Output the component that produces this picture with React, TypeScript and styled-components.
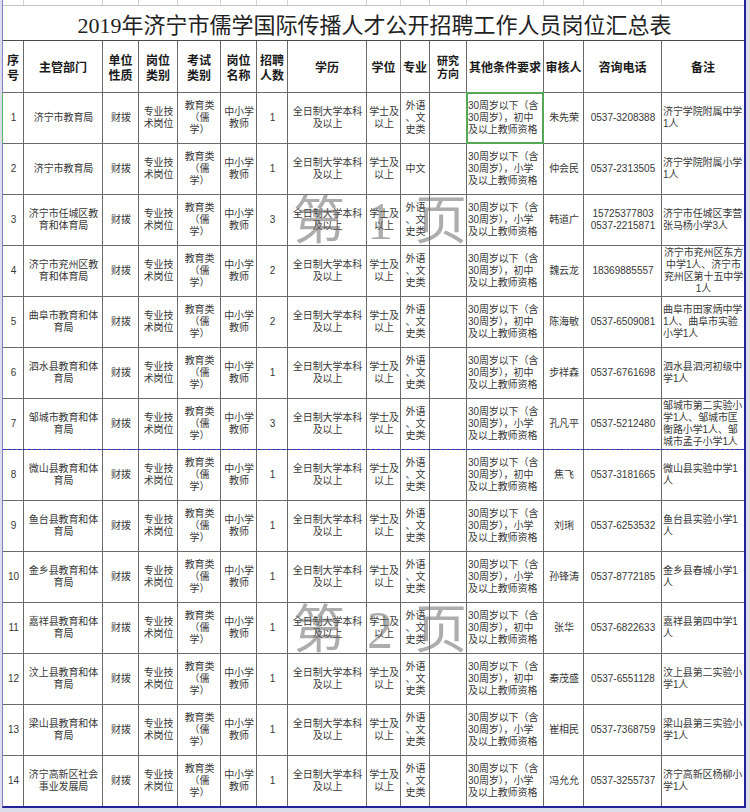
import React from "react";
import styled, { createGlobalStyle } from "styled-components";

const COLS = "20px 78px 35px 38px 42px 35px 30px 78px 33px 28px 36px 76px 39px 77px 82px";

const Global = createGlobalStyle`
  html, body { margin: 0; padding: 0; background: #dcdcea; }
  body { font-family: "Liberation Sans", "Noto Sans CJK SC", sans-serif; }
`;

const Page = styled.div`
  width: 750px;
  height: 812px;
  background: #dcdcea;
  display: flex;
  align-items: flex-start;
  overflow: hidden;
`;

const Sheet = styled.div`
  position: relative;
  margin-left: 2px;
  width: 741px;
  display: flex;
  flex-direction: column;
  border-left: 1px solid #8080c8;
  border-right: 2px solid #24249a;
  border-bottom: 2px solid #24249a;
  background: #fff;
`;

const TopStrip = styled.div`
  display: grid;
  grid-template-columns: ${COLS};
  column-gap: 1px;
  height: 5px;
  background: #d2d2d2;
  border-bottom: 1px solid #c4c4c4;
`;

const StripCell = styled.div`
  background: #fff;
`;

const TitleRow = styled.div`
  height: 34px;
  display: flex;
  align-items: center;
  justify-content: center;
  border-bottom: 1px solid #4a4a4a;
  font-family: "Liberation Serif", "Noto Sans CJK SC", serif;
  font-size: 22px;
  color: #222;
  padding-left: 2px;
`;

const Table = styled.div`
  position: relative;
  display: grid;
  grid-template-columns: ${COLS};
  grid-template-rows: 51px repeat(14, 50px);
  gap: 1px;
  background: #6a6a6a;
`;

const HeadCell = styled.div<{ $small?: boolean }>`
  background: #fff;
  display: flex;
  align-items: center;
  justify-content: center;
  text-align: center;
  white-space: pre;
  font-family: "Noto Sans CJK SC", sans-serif;
  font-size: ${(p) => (p.$small ? "11px" : "12px")};
  line-height: ${(p) => (p.$small ? "13px" : "15px")};
  font-weight: 600;
  color: #1a1a1a;
`;

const Cell = styled.div<{
  $align?: "left" | "center";
  $phone?: boolean;
  $selected?: boolean;
  $mark?: boolean;
}>`
  position: relative;
  background: #fff;
  display: flex;
  align-items: center;
  justify-content: ${(p) => (p.$align === "left" ? "flex-start" : "center")};
  text-align: ${(p) => (p.$align === "left" ? "left" : "center")};
  padding: 0 0 0 1px;
  white-space: pre;
  font-size: 10px;
  letter-spacing: ${(p) => (p.$phone ? "0" : "-0.1px")};
  line-height: 12px;
  color: #383838;
  ${(p) =>
    p.$selected
      ? `box-shadow: 0 0 0 1px #55a855, inset 0 0 0 1px #55a855; z-index: 2;`
      : ""}
  ${(p) => (p.$mark ? `box-shadow: -1px 0 0 0 #5cb85c; z-index: 2;` : "")}
`;

const PageBreak = styled.div<{ $top: number }>`
  position: absolute;
  left: 0;
  right: 0;
  top: ${(p) => p.$top}px;
  height: 0;
  border-top: 1px dashed #2a2ad0;
  z-index: 3;
`;

const Watermark = styled.div<{ $top: number }>`
  position: absolute;
  left: 290px;
  top: ${(p) => p.$top}px;
  display: flex;
  gap: 22px;
  align-items: center;
  font-family: "Liberation Serif", "Noto Sans CJK SC", serif;
  font-size: 52px;
  line-height: 52px;
  color: rgba(105, 105, 105, 0.55);
  pointer-events: none;
  z-index: 4;
`;

const headers: { t: string; small?: boolean }[] = [
  { t: "序\n号" },
  { t: "主管部门" },
  { t: "单位\n性质" },
  { t: "岗位\n类别" },
  { t: "考试\n类别" },
  { t: "岗位\n名称" },
  { t: "招聘\n人数" },
  { t: "学历" },
  { t: "学位" },
  { t: "专业" },
  { t: "研究\n方向", small: true },
  { t: "其他条件要求" },
  { t: "审核人" },
  { t: "咨询电话" },
  { t: "备注" },
];

type Row = {
  n: string;
  dept: string;
  count: string;
  major?: string;
  level: string;
  reviewer: string;
  phone: string;
  note: string;
  noteCenter?: boolean;
};

const rows: Row[] = [
  { n: "1", dept: "济宁市教育局", count: "1", level: "初中", reviewer: "朱先荣", phone: "0537-3208388", note: "济宁学院附属中学\n1人" },
  { n: "2", dept: "济宁市教育局", count: "1", major: "中文", level: "小学", reviewer: "仲会民", phone: "0537-2313505", note: "济宁学院附属小学\n1人" },
  { n: "3", dept: "济宁市任城区教\n育和体育局", count: "3", level: "小学", reviewer: "韩道广", phone: "15725377803\n0537-2215871", note: "济宁市任城区李营\n张马杨小学3人" },
  { n: "4", dept: "济宁市兖州区教\n育和体育局", count: "2", level: "初中", reviewer: "魏云龙", phone: "18369885557", note: "济宁市兖州区东方\n中学1人、济宁市\n兖州区第十五中学\n1人", noteCenter: true },
  { n: "5", dept: "曲阜市教育和体\n育局", count: "2", level: "初中", reviewer: "陈海敏", phone: "0537-6509081", note: "曲阜市田家炳中学\n1人、曲阜市实验\n小学1人" },
  { n: "6", dept: "泗水县教育和体\n育局", count: "1", level: "初中", reviewer: "步祥森", phone: "0537-6761698", note: "泗水县泗河初级中\n学1人" },
  { n: "7", dept: "邹城市教育和体\n育局", count: "3", level: "小学", reviewer: "孔凡平", phone: "0537-5212480", note: "邹城市第二实验小\n学1人、邹城市匡\n衡路小学1人、邹\n城市孟子小学1人" },
  { n: "8", dept: "微山县教育和体\n育局", count: "1", level: "初中", reviewer: "焦飞", phone: "0537-3181665", note: "微山县实验中学1\n人" },
  { n: "9", dept: "鱼台县教育和体\n育局", count: "1", level: "小学", reviewer: "刘琍", phone: "0537-6253532", note: "鱼台县实验小学1\n人" },
  { n: "10", dept: "金乡县教育和体\n育局", count: "1", level: "小学", reviewer: "孙锋涛", phone: "0537-8772185", note: "金乡县春城小学1\n人" },
  { n: "11", dept: "嘉祥县教育和体\n育局", count: "1", level: "初中", reviewer: "张华", phone: "0537-6822633", note: "嘉祥县第四中学1\n人" },
  { n: "12", dept: "汶上县教育和体\n育局", count: "1", level: "初中", reviewer: "秦茂盛", phone: "0537-6551128", note: "汶上县第二实验小\n学1人" },
  { n: "13", dept: "梁山县教育和体\n育局", count: "1", level: "小学", reviewer: "崔相民", phone: "0537-7368759", note: "梁山县第三实验小\n学1人" },
  { n: "14", dept: "济宁高新区社会\n事业发展局", count: "1", level: "小学", reviewer: "冯允允", phone: "0537-3255737", note: "济宁高新区杨柳小\n学1人" },
];

export default function App() {
  return (
    <Page>
      <Global />
      <Sheet>
        <TopStrip>
          {headers.map((_, i) => (
            <StripCell key={i} />
          ))}
        </TopStrip>
        <TitleRow>2019年济宁市儒学国际传播人才公开招聘工作人员岗位汇总表</TitleRow>
        <Table>
          {headers.map((h, i) => (
            <HeadCell key={i} $small={h.small}>
              {h.t}
            </HeadCell>
          ))}
          {rows.map((r, i) => (
            <React.Fragment key={r.n}>
              <Cell $mark={i === 0}>{r.n}</Cell>
              <Cell>{r.dept}</Cell>
              <Cell>财拨</Cell>
              <Cell>{"专业技\n术岗位"}</Cell>
              <Cell>{"教育类\n（儒\n学）"}</Cell>
              <Cell>{"中小学\n教师"}</Cell>
              <Cell>{r.count}</Cell>
              <Cell>{"全日制大学本科\n及以上"}</Cell>
              <Cell>{"学士及\n以上"}</Cell>
              <Cell>{r.major ?? "外语\n、文\n史类"}</Cell>
              <Cell />
              <Cell $align="left" $selected={i === 0}>
                {`30周岁以下（含\n30周岁），${r.level}\n及以上教师资格`}
              </Cell>
              <Cell>{r.reviewer}</Cell>
              <Cell $phone>{r.phone}</Cell>
              <Cell $align={r.noteCenter ? "center" : "left"}>{r.note}</Cell>
            </React.Fragment>
          ))}
          <PageBreak $top={408} />
        </Table>
        <Watermark $top={196}>
          <span>第</span>
          <span>1</span>
          <span>页</span>
        </Watermark>
        <Watermark $top={605}>
          <span>第</span>
          <span>2</span>
          <span>页</span>
        </Watermark>
      </Sheet>
    </Page>
  );
}
